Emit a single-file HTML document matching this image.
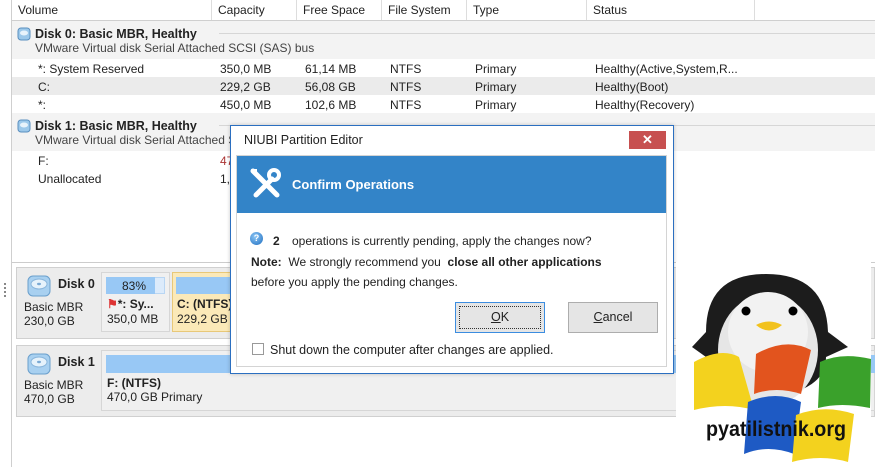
<!DOCTYPE html>
<html><head><style>
*{margin:0;padding:0;box-sizing:border-box}
body{width:875px;height:467px;overflow:hidden;background:#fff;font-family:"Liberation Sans",sans-serif;font-size:12px;color:#222;position:relative}
.a{position:absolute;white-space:nowrap}
.b{font-weight:bold}
</style></head><body>
<div class="a" style="left:11px;top:0;width:1px;height:467px;background:#cfcfcf"></div>
<!-- header -->
<div class="a" style="left:12px;top:0;width:863px;height:21px;border-bottom:1px solid #cfcfcf;background:#fff"></div>
<div class="a" style="left:18px;top:3px">Volume</div>
<div class="a" style="left:211px;top:0;width:1px;height:20px;background:#ddd"></div>
<div class="a" style="left:218px;top:3px">Capacity</div>
<div class="a" style="left:296px;top:0;width:1px;height:20px;background:#ddd"></div>
<div class="a" style="left:303px;top:3px">Free Space</div>
<div class="a" style="left:381px;top:0;width:1px;height:20px;background:#ddd"></div>
<div class="a" style="left:388px;top:3px">File System</div>
<div class="a" style="left:466px;top:0;width:1px;height:20px;background:#ddd"></div>
<div class="a" style="left:473px;top:3px">Type</div>
<div class="a" style="left:586px;top:0;width:1px;height:20px;background:#ddd"></div>
<div class="a" style="left:593px;top:3px">Status</div>
<div class="a" style="left:754px;top:0;width:1px;height:20px;background:#ddd"></div>
<!-- disk0 group -->
<div class="a" style="left:12px;top:21px;width:863px;height:38px;background:#f3f3f3"></div>
<div class="a" style="left:219px;top:33px;width:656px;height:1px;background:#d6d6d6"></div>
<svg class="a" style="left:17px;top:27px" width="14" height="14"><rect x="1" y="1" width="12" height="12" rx="3" fill="#9cc8ea" stroke="#5a8fbf"/><ellipse cx="7" cy="6" rx="4" ry="2.5" fill="#e8f3fb"/></svg>
<div class="a b" style="left:35px;top:27px;font-size:12.5px">Disk 0: Basic MBR, Healthy</div>
<div class="a" style="left:35px;top:41px;color:#444">VMware Virtual disk Serial Attached SCSI (SAS) bus</div>
<div class="a" style="left:12px;top:77px;width:863px;height:18px;background:#ebebeb"></div>
<div class="a" style="left:38px;top:62px">*: System Reserved</div><div class="a" style="left:220px;top:62px">350,0 MB</div><div class="a" style="left:305px;top:62px">61,14 MB</div><div class="a" style="left:390px;top:62px">NTFS</div><div class="a" style="left:475px;top:62px">Primary</div><div class="a" style="left:595px;top:62px">Healthy(Active,System,R...</div>
<div class="a" style="left:38px;top:80px">C:</div><div class="a" style="left:220px;top:80px">229,2 GB</div><div class="a" style="left:305px;top:80px">56,08 GB</div><div class="a" style="left:390px;top:80px">NTFS</div><div class="a" style="left:475px;top:80px">Primary</div><div class="a" style="left:595px;top:80px">Healthy(Boot)</div>
<div class="a" style="left:38px;top:98px">*:</div><div class="a" style="left:220px;top:98px">450,0 MB</div><div class="a" style="left:305px;top:98px">102,6 MB</div><div class="a" style="left:390px;top:98px">NTFS</div><div class="a" style="left:475px;top:98px">Primary</div><div class="a" style="left:595px;top:98px">Healthy(Recovery)</div>
<!-- disk1 group -->
<div class="a" style="left:12px;top:113px;width:863px;height:38px;background:#f3f3f3"></div>
<div class="a" style="left:219px;top:125px;width:656px;height:1px;background:#d6d6d6"></div>
<svg class="a" style="left:17px;top:119px" width="14" height="14"><rect x="1" y="1" width="12" height="12" rx="3" fill="#9cc8ea" stroke="#5a8fbf"/><ellipse cx="7" cy="6" rx="4" ry="2.5" fill="#e8f3fb"/></svg>
<div class="a b" style="left:35px;top:119px;font-size:12.5px">Disk 1: Basic MBR, Healthy</div>
<div class="a" style="left:35px;top:133px;color:#444">VMware Virtual disk Serial Attached SCSI (SAS) bus</div>
<div class="a" style="left:38px;top:154px">F:</div><div class="a" style="left:220px;top:154px;color:#a33">470,0 GB</div>
<div class="a" style="left:38px;top:172px">Unallocated</div><div class="a" style="left:220px;top:172px">1,0 MB</div>
<!-- bottom panel -->
<div class="a" style="left:12px;top:262px;width:863px;height:1px;background:#ccc"></div>
<div class="a" style="left:4px;top:283px;width:2px;height:14px;border-left:2px dotted #888"></div>
<div class="a" style="left:16px;top:267px;width:859px;height:72px;background:#ececec;border:1px solid #d0d0d0"></div>
<div class="a" style="left:16px;top:345px;width:859px;height:72px;background:#ececec;border:1px solid #d0d0d0"></div>
<svg class="a" style="left:27px;top:275px" width="24" height="22"><rect x="1" y="1" width="22" height="20" rx="5" fill="#a8d0f0" stroke="#6a9fcc"/><ellipse cx="12" cy="9" rx="8" ry="5" fill="#e6f2fb" stroke="#8ab6dc"/><ellipse cx="12" cy="9" rx="2" ry="1.2" fill="#7aa9d4"/></svg>
<div class="a b" style="left:58px;top:277px;font-size:12.5px">Disk 0</div>
<div class="a" style="left:24px;top:300px">Basic MBR</div><div class="a" style="left:24px;top:314px">230,0 GB</div>
<div class="a" style="left:101px;top:272px;width:69px;height:60px;background:#f0f0f0;border:1px solid #d6d6d6"></div>
<div class="a" style="left:106px;top:277px;width:59px;height:17px;background:#dcebfb;border:1px solid #b9d6f3"></div>
<div class="a" style="left:106px;top:277px;width:49px;height:17px;background:#98c8f5"></div>
<div class="a" style="left:122px;top:279px">83%</div>
<div class="a b" style="left:107px;top:297px"><span style="color:#d33">⚑</span>*: Sy...</div>
<div class="a" style="left:107px;top:312px">350,0 MB</div>
<div class="a" style="left:172px;top:272px;width:60px;height:60px;background:#fbe9b8;border:1px solid #e8c878"></div>
<div class="a" style="left:176px;top:277px;width:56px;height:17px;background:#98c8f5"></div>
<div class="a b" style="left:177px;top:297px">C: (NTFS)</div><div class="a" style="left:177px;top:312px">229,2 GB</div>
<svg class="a" style="left:27px;top:353px" width="24" height="22"><rect x="1" y="1" width="22" height="20" rx="5" fill="#a8d0f0" stroke="#6a9fcc"/><ellipse cx="12" cy="9" rx="8" ry="5" fill="#e6f2fb" stroke="#8ab6dc"/><ellipse cx="12" cy="9" rx="2" ry="1.2" fill="#7aa9d4"/></svg>
<div class="a b" style="left:58px;top:355px;font-size:12.5px">Disk 1</div>
<div class="a" style="left:24px;top:378px">Basic MBR</div><div class="a" style="left:24px;top:392px">470,0 GB</div>
<div class="a" style="left:101px;top:350px;width:774px;height:61px;background:#f0f0f0;border:1px solid #d6d6d6"></div>
<div class="a" style="left:106px;top:355px;width:769px;height:18px;background:#98c8f5"></div>
<div class="a b" style="left:107px;top:376px">F: (NTFS)</div><div class="a" style="left:107px;top:390px">470,0 GB Primary</div>
<!-- dialog -->
<div class="a" style="left:230px;top:125px;width:444px;height:249px;background:#fff;border:1px solid #2b6fc0;box-shadow:0 0 4px rgba(0,0,0,.2)"></div>
<div class="a" style="left:244px;top:133px;font-size:12.5px">NIUBI Partition Editor</div>
<div class="a" style="left:629px;top:131px;width:37px;height:18px;background:#c75050;color:#fff;text-align:center;font-size:13px;font-weight:bold;line-height:18px">✕</div>
<div class="a" style="left:236px;top:155px;width:431px;height:212px;border:1px solid #d4d4d4"></div>
<div class="a" style="left:237px;top:156px;width:429px;height:57px;background:#3384c8"></div>
<svg class="a" style="left:248px;top:166px" width="34" height="34" viewBox="0 0 34 34"><g stroke="#fff" stroke-linecap="round" fill="none"><path d="M5 5 L29 29" stroke-width="5"/><path d="M8 29 L24 13" stroke-width="5"/><circle cx="26" cy="9" r="5" stroke-width="4"/></g><path d="M3 3 L9 3 L9 9 Z" fill="#fff"/></svg>
<div class="a b" style="left:292px;top:177px;color:#fff;font-size:13px">Confirm Operations</div>
<div class="a" style="left:250px;top:232px;width:13px;height:13px;border-radius:50%;background:radial-gradient(circle at 40% 35%,#8cc6f5,#1f6ec0);color:#fff;font-size:9px;font-weight:bold;text-align:center;line-height:13px">?</div>
<div class="a b" style="left:273px;top:234px">2</div>
<div class="a" style="left:292px;top:234px">operations is currently pending, apply the changes now?</div>
<div class="a" style="left:251px;top:255px"><b>Note:</b>&nbsp; We strongly recommend you &nbsp;<b>close all other applications</b></div>
<div class="a" style="left:251px;top:275px">before you apply the pending changes.</div>
<div class="a" style="left:455px;top:302px;width:90px;height:31px;background:#e5e5e5;border:1px solid #3c8de0"></div>
<div class="a" style="left:459px;top:306px;width:82px;height:23px;border:1px dotted #333;text-align:center;line-height:21px;font-size:12.5px"><u>O</u>K</div>
<div class="a" style="left:568px;top:302px;width:90px;height:31px;background:#e5e5e5;border:1px solid #adadad;text-align:center;line-height:29px;font-size:12.5px"><u>C</u>ancel</div>
<div class="a" style="left:252px;top:343px;width:12px;height:12px;border:1px solid #999;background:#fff"></div>
<div class="a" style="left:270px;top:343px;font-size:12.5px">Shut down the computer after changes are applied.</div>
<!-- logo -->
<svg class="a" style="left:676px;top:262px" width="195" height="202" viewBox="0 0 195 202">
<rect x="0" y="0" width="195" height="202" fill="#fff"/>
<path d="M30 70 Q30 12 90 12 Q150 12 152 70 L172 85 L150 95 Q150 130 90 135 Q32 130 30 95 L16 85 Z" fill="#1c1c1c"/>
<ellipse cx="92" cy="88" rx="50" ry="56" fill="#e6e6e6"/>
<ellipse cx="92" cy="70" rx="40" ry="40" fill="#f2f2f2"/>
<circle cx="70" cy="49" r="4.5" fill="#000"/><circle cx="117" cy="49" r="4.5" fill="#000"/>
<path d="M80 63 Q93 56 106 63 Q93 74 80 63Z" fill="#f2c21d"/>
<path d="M18 100 Q45 85 63 95 L78 148 Q50 140 18 148 Z" fill="#f3d21e"/>
<path d="M80 92 Q110 75 135 88 L125 132 Q100 124 78 132 Z" fill="#e2541e"/>
<path d="M144 100 Q165 90 195 97 L194 146 Q165 140 142 146 Z" fill="#3aa12b"/>
<path d="M72 140 Q100 128 125 140 L118 192 Q92 182 68 192 Z" fill="#1e5ac4"/>
<path d="M120 153 Q148 142 178 152 L172 200 Q145 192 116 200 Z" fill="#f3d21e"/>
<text x="30" y="174" font-family="Liberation Sans,sans-serif" font-weight="bold" font-size="21" fill="#111" textLength="140" lengthAdjust="spacingAndGlyphs">pyatilistnik.org</text>
</svg>
</body></html>
